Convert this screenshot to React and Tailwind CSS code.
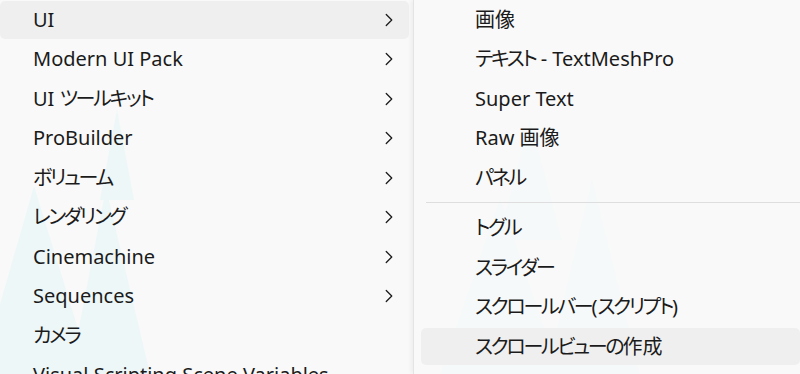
import { ChevronRight } from "lucide-react";

const leftItems = [
  { label: "UI", sub: true, active: true },
  { label: "Modern UI Pack", sub: true },
  { label: "UI ツールキット", sub: true },
  { label: "ProBuilder", sub: true },
  { label: "ボリューム", sub: true },
  { label: "レンダリング", sub: true },
  { label: "Cinemachine", sub: true },
  { label: "Sequences", sub: true },
  { label: "カメラ" },
  { label: "Visual Scripting Scene Variables" },
];

const rightTop = ["画像", "テキスト - TextMeshPro", "Super Text", "Raw 画像", "パネル"];
const rightBottom = [
  { label: "トグル" },
  { label: "スライダー" },
  { label: "スクロールバー(スクリプト)" },
  { label: "スクロールビューの作成", active: true },
];

function Trees() {
  // faint tree shapes that show through the translucent menu
  return (
    <svg className="absolute inset-0 h-full w-full" viewBox="0 0 800 374" preserveAspectRatio="none">
      <g fill="#e9f7f8" opacity="0.75">
        <polygon points="34,186 -20,374 92,374" />
        <polygon points="106,188 70,374 150,374" />
        <polygon points="117,110 100,200 134,200" />
        <polygon points="500,198 440,374 560,374" />
        <polygon points="530,118 498,240 562,240" />
        <polygon points="592,178 546,374 640,374" />
        <polygon points="605,318 590,374 620,374" />
      </g>
    </svg>
  );
}

// kana in the system UI font is narrower than Noto's, so tighten kana runs only
function Label({ text }) {
  const parts = text.split(/([\u3040-\u30ff]+)/).filter(Boolean);
  return (
    <span className="flex-1 whitespace-nowrap">
      {parts.map((p, i) =>
        /[\u3040-\u30ff]/.test(p) ? (
          <span key={i} className="tracking-[-2.3px]">
            {p}
          </span>
        ) : (
          <span key={i}>{p}</span>
        )
      )}
    </span>
  );
}

function Row({ label, sub, active, left }) {
  return (
    <div className="h-[39.5px] py-[1px]">
      <div
        className={`flex h-full items-center rounded-[5px] ${active ? "bg-[#efefef]" : ""} ${
          left ? "pl-[33px] pr-[9px]" : "pl-[54px]"
        }`}
      >
        <Label text={label} />
        {sub && <ChevronRight size={22} strokeWidth={1.4} className="text-[#1b1b1b]" />}
      </div>
    </div>
  );
}

export default function App() {
  return (
    <div
      className="relative flex h-[374px] w-[800px] overflow-hidden bg-[#f9f9f9] text-[20px] text-[#1b1b1b] [font-feature-settings:'palt']"
      style={{ fontFamily: '"Noto Sans", "Noto Sans CJK JP", sans-serif' }}
    >
      <Trees />
      <div className="relative w-[413px] pr-[4px]">
        {leftItems.map((it) => (
          <Row key={it.label} {...it} left />
        ))}
      </div>
      <div className="relative flex-1 border-l border-[#e4e4e4] bg-[#f9f9f9]/70 pl-[7px] shadow-[-2px_0_4px_rgba(0,0,0,0.05)]">
        {rightTop.map((l) => (
          <Row key={l} label={l} />
        ))}
        <div className="flex h-[10.75px] items-center pl-[5px]">
          <div className="h-px w-full bg-[#dedede]" />
        </div>
        {rightBottom.map((it) => (
          <Row key={it.label} {...it} />
        ))}
      </div>
    </div>
  );
}
